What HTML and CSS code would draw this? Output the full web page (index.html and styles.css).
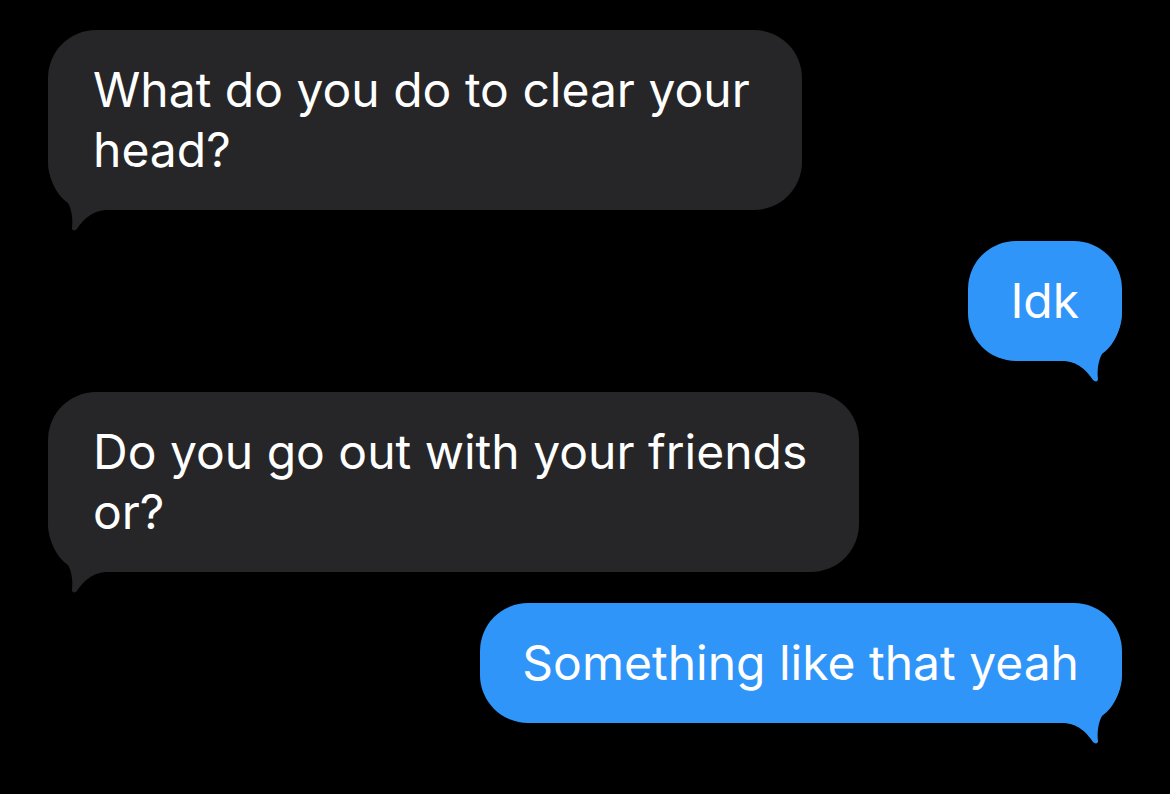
FILE: index.html
```html
<!DOCTYPE html>
<html lang="en">
<head>
<meta charset="utf-8">
<title>Messages</title>
<link rel="stylesheet" href="styles.css">
</head>
<body>
<main class="thread">
  <div class="bubble them">
    <p class="text">What do you do to clear your<br>head?</p>
    <svg class="tail" width="62" height="70" viewBox="0 -50 62 70" aria-hidden="true"><path d="M0,-55 C0,-28 10,-14 20,-7 C24,0 25,10 24,18 C24,21 27,21 29,19 C35,10 44,0 60,0 L62,-55 Z"/></svg>
  </div>
  <div class="bubble me">
    <p class="text">Idk</p>
    <svg class="tail" width="62" height="70" viewBox="-62 -50 62 70" aria-hidden="true"><path d="M0,-55 C0,-28 -10,-14 -20,-7 C-24,0 -25,10 -24,18 C-24,21 -27,21 -29,19 C-35,10 -44,0 -60,0 L-62,-55 Z"/></svg>
  </div>
  <div class="bubble them">
    <p class="text">Do you go out with your friends<br>or?</p>
    <svg class="tail" width="62" height="70" viewBox="0 -50 62 70" aria-hidden="true"><path d="M0,-55 C0,-28 10,-14 20,-7 C24,0 25,10 24,18 C24,21 27,21 29,19 C35,10 44,0 60,0 L62,-55 Z"/></svg>
  </div>
  <div class="bubble me">
    <p class="text">Something like that yeah</p>
    <svg class="tail" width="62" height="70" viewBox="-62 -50 62 70" aria-hidden="true"><path d="M0,-55 C0,-28 -10,-14 -20,-7 C-24,0 -25,10 -24,18 C-24,21 -27,21 -29,19 C-35,10 -44,0 -60,0 L-62,-55 Z"/></svg>
  </div>
</main>
</body>
</html>
```
FILE: styles.css
```css
html, body {
  margin: 0;
  padding: 0;
  background: #000;
}

body {
  width: 1170px;
  height: 794px;
  overflow: hidden;
  font-family: "Inter", "Liberation Sans", sans-serif;
  color: #fff;
}

.thread {
  display: flex;
  flex-direction: column;
  gap: 31px;
  padding: 30px 48px 0;
}

.bubble {
  position: relative;
  border-radius: 48px;
  padding: 30px 0;
}

.text {
  margin: 0;
  font-size: 48px;
  line-height: 60px;
  position: relative;
  z-index: 1;
}

.them {
  align-self: flex-start;
  background: #262628;
  padding-left: 45px;
  padding-right: 52px;
}

.me {
  align-self: flex-end;
  background: #2f95f8;
  padding-left: 42px;
  padding-right: 43px;
}

.tail {
  position: absolute;
  bottom: -20px;
  display: block;
  overflow: visible;
}

.them .tail {
  left: 0;
  fill: #262628;
}

.me .tail {
  right: 0;
  fill: #2f95f8;
}
```
